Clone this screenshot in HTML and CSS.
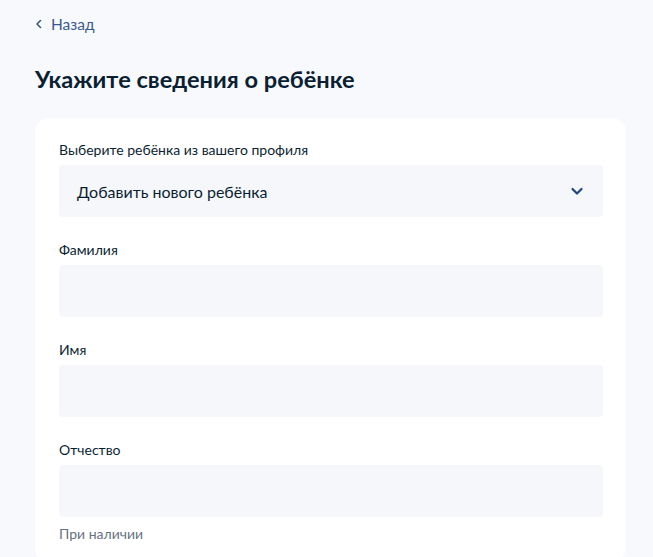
FILE: index.html
```html
<!DOCTYPE html>
<html lang="ru">
<head>
<meta charset="utf-8">
<link rel="stylesheet" href="styles.css">
</head>
<body>
<div class="page">
  <a class="back" href="#">
    <svg class="back-icon" width="8" height="10" viewBox="0 0 8 10"><path d="M5.5 1.5 L2 5 L5.5 8.5" fill="none" stroke="#3a5a8e" stroke-width="1.6" stroke-linecap="round" stroke-linejoin="round"/></svg>
    <span>Назад</span>
  </a>
  <h1 class="title">Укажите сведения о ребёнке</h1>
  <div class="card">
    <div class="field">
      <div class="label">Выберите ребёнка из вашего профиля</div>
      <div class="input select">
        <span>Добавить нового ребёнка</span>
        <svg width="14" height="9" viewBox="0 0 14 9"><path d="M2.5 2 L7 6.5 L11.5 2" fill="none" stroke="#1f4480" stroke-width="2.2" stroke-linecap="round" stroke-linejoin="round"/></svg>
      </div>
    </div>
    <div class="field">
      <div class="label">Фамилия</div>
      <div class="input"></div>
    </div>
    <div class="field">
      <div class="label">Имя</div>
      <div class="input"></div>
    </div>
    <div class="field">
      <div class="label">Отчество</div>
      <div class="input"></div>
      <div class="hint">При наличии</div>
    </div>
  </div>
</div>
</body>
</html>
```
FILE: styles.css
```css
html, body {
  margin: 0;
  padding: 0;
  background: #f8f9fc;
  font-family: Lato, "Open Sans", "Liberation Sans", sans-serif;
  color: #0b1f33;
}
.page {
  padding: 14px 27px 0 35px;
}
.back {
  display: flex;
  align-items: center;
  gap: 8px;
  color: #3a5a8e;
  text-decoration: none;
  font-size: 15.5px;
  line-height: 20px;
}
.title {
  margin: 30px 0 0;
  font-size: 23.6px;
  font-weight: 700;
  line-height: 30px;
  color: #0b1f33;
}
.card {
  margin-top: 24px;
  background: #fff;
  border-radius: 14px;
  padding: 23px 23px 20px 24px;
  display: flex;
  flex-direction: column;
  gap: 24px;
}
.field {
  display: flex;
  flex-direction: column;
}
.label {
  font-size: 14px;
  line-height: 17px;
  margin-bottom: 7px;
}
.input {
  height: 52px;
  background: #f5f7fa;
  border-radius: 4px;
}
.select {
  display: flex;
  align-items: center;
  justify-content: space-between;
  padding: 0 19px 0 18px;
  font-size: 16px;
}
.hint {
  margin-top: 8px;
  font-size: 14px;
  line-height: 17px;
  color: #66727f;
}
```
